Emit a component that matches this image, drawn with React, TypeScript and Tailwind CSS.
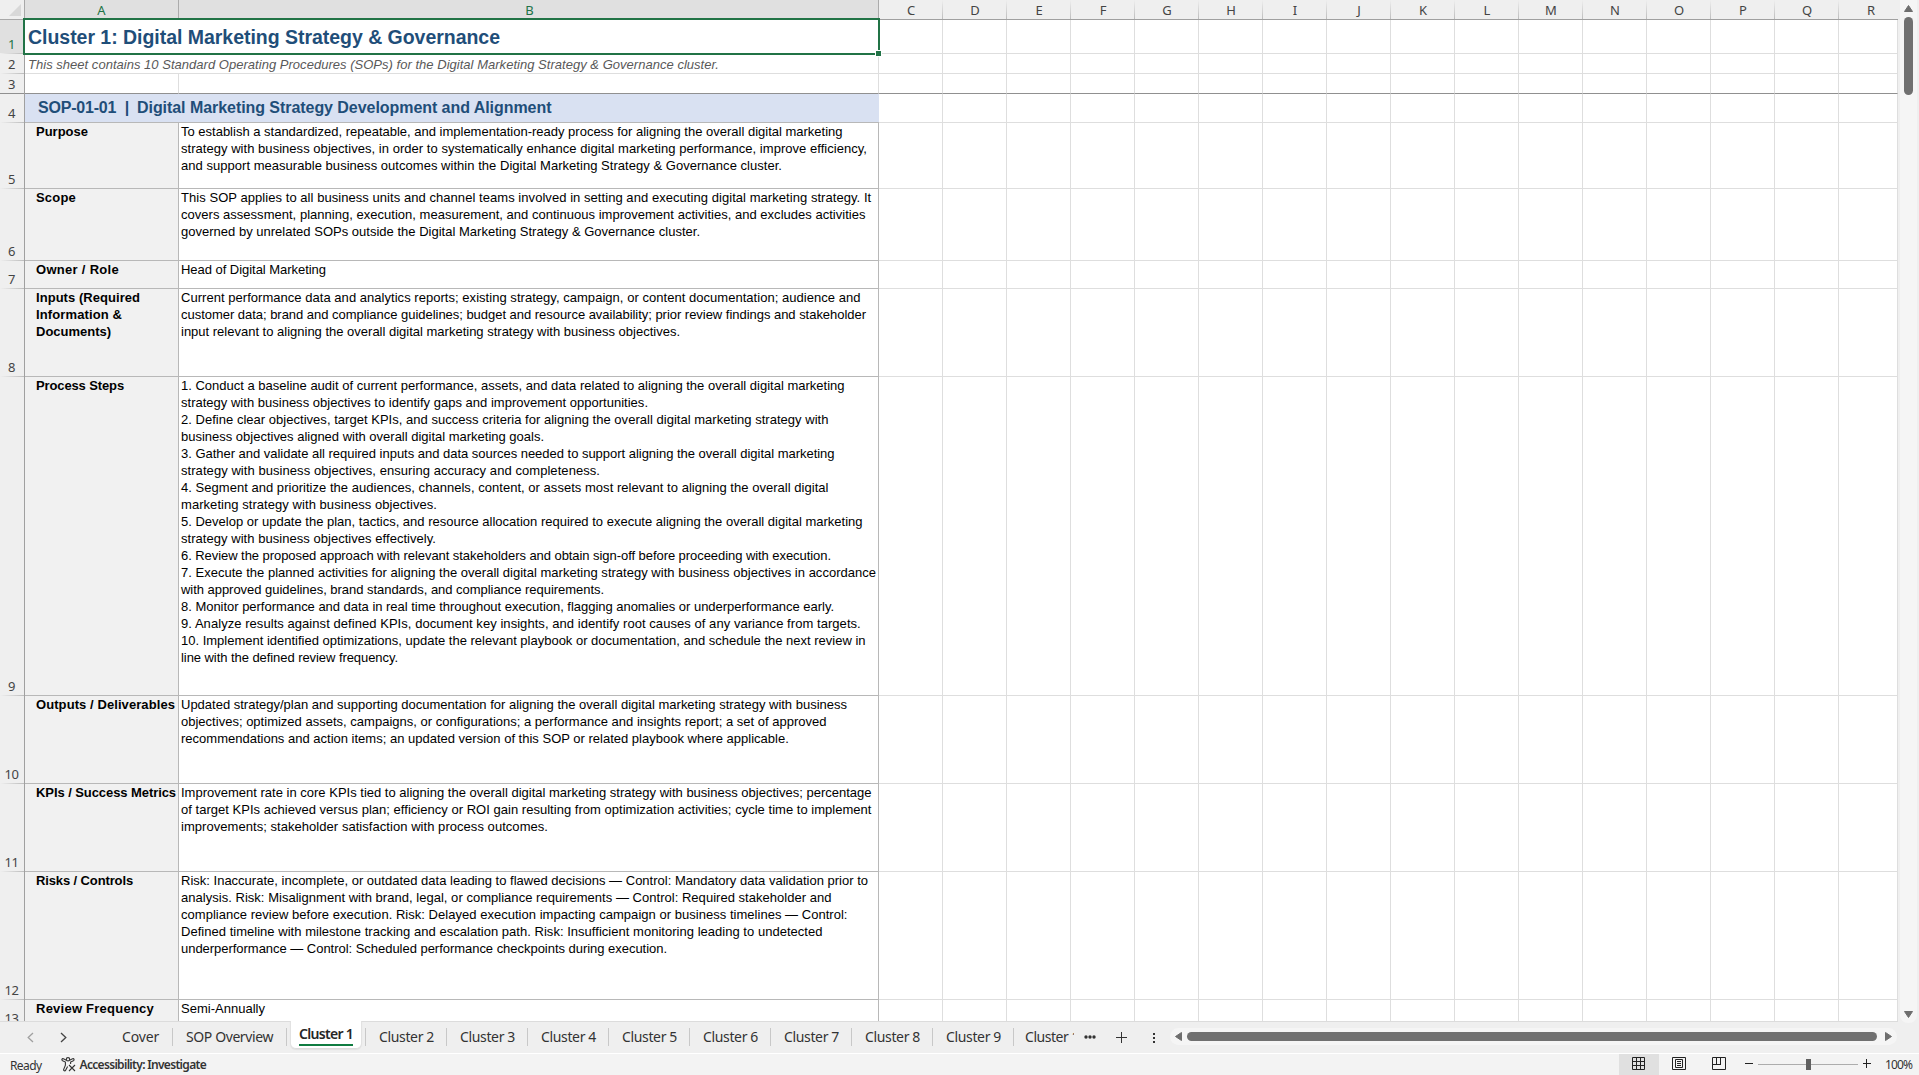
import clsx from 'clsx'

type Line = [text: string, width: number]

type SheetRow = {
  n: number
  height: string
  label: Line[]
  lines: Line[]
}

const SHEET_ROWS: SheetRow[] = [
  {
    n: 5,
    height: 'h-[66px]',
    label: [['Purpose', 52]],
    lines: [
      ['To establish a standardized, repeatable, and implementation-ready process for aligning the overall digital marketing', 661.5],
      ['strategy with business objectives, in order to systematically enhance digital marketing performance, improve efficiency,', 686],
      ['and support measurable business outcomes within the Digital Marketing Strategy & Governance cluster.', 601],
    ],
  },
  {
    n: 6,
    height: 'h-[72px]',
    label: [['Scope', 40]],
    lines: [
      ['This SOP applies to all business units and channel teams involved in setting and executing digital marketing strategy. It', 690.5],
      ['covers assessment, planning, execution, measurement, and continuous improvement activities, and excludes activities', 684.5],
      ['governed by unrelated SOPs outside the Digital Marketing Strategy & Governance cluster.', 519],
    ],
  },
  {
    n: 7,
    height: 'h-[28px]',
    label: [['Owner / Role', 83]],
    lines: [['Head of Digital Marketing', 145]],
  },
  {
    n: 8,
    height: 'h-[88px]',
    label: [['Inputs (Required', 104], ['Information &', 86], ['Documents)', 75]],
    lines: [
      ['Current performance data and analytics reports; existing strategy, campaign, or content documentation; audience and', 679.5],
      ['customer data; brand and compliance guidelines; budget and resource availability; prior review findings and stakeholder', 685],
      ['input relevant to aligning the overall digital marketing strategy with business objectives.', 499],
    ],
  },
  {
    n: 9,
    height: 'h-[319px]',
    label: [['Process Steps', 88]],
    lines: [
      ['1. Conduct a baseline audit of current performance, assets, and data related to aligning the overall digital marketing', 663.5],
      ['strategy with business objectives to identify gaps and improvement opportunities.', 467],
      ['2. Define clear objectives, target KPIs, and success criteria for aligning the overall digital marketing strategy with', 647.5],
      ['business objectives aligned with overall digital marketing goals.', 363],
      ['3. Gather and validate all required inputs and data sources needed to support aligning the overall digital marketing', 653.5],
      ['strategy with business objectives, ensuring accuracy and completeness.', 419],
      ['4. Segment and prioritize the audiences, channels, content, or assets most relevant to aligning the overall digital', 647.5],
      ['marketing strategy with business objectives.', 256],
      ['5. Develop or update the plan, tactics, and resource allocation required to execute aligning the overall digital marketing', 681.5],
      ['strategy with business objectives effectively.', 255],
      ['6. Review the proposed approach with relevant stakeholders and obtain sign-off before proceeding with execution.', 650],
      ['7. Execute the planned activities for aligning the overall digital marketing strategy with business objectives in accordance', 695],
      ['with approved guidelines, brand standards, and compliance requirements.', 423],
      ['8. Monitor performance and data in real time throughout execution, flagging anomalies or underperformance early.', 653],
      ['9. Analyze results against defined KPIs, document key insights, and identify root causes of any variance from targets.', 680.5],
      ['10. Implement identified optimizations, update the relevant playbook or documentation, and schedule the next review in', 684.5],
      ['line with the defined review frequency.', 217],
    ],
  },
  {
    n: 10,
    height: 'h-[88px]',
    label: [['Outputs / Deliverables', 139]],
    lines: [
      ['Updated strategy/plan and supporting documentation for aligning the overall digital marketing strategy with business', 666],
      ['objectives; optimized assets, campaigns, or configurations; a performance and insights report; a set of approved', 645.5],
      ['recommendations and action items; an updated version of this SOP or related playbook where applicable.', 608],
    ],
  },
  {
    n: 11,
    height: 'h-[88px]',
    label: [['KPIs / Success Metrics', 140]],
    lines: [
      ['Improvement rate in core KPIs tied to aligning the overall digital marketing strategy with business objectives; percentage', 690.5],
      ['of target KPIs achieved versus plan; efficiency or ROI gain resulting from optimization activities; cycle time to implement', 690.5],
      ['improvements; stakeholder satisfaction with process outcomes.', 367],
    ],
  },
  {
    n: 12,
    height: 'h-[128px]',
    label: [['Risks / Controls', 97]],
    lines: [
      ['Risk: Inaccurate, incomplete, or outdated data leading to flawed decisions — Control: Mandatory data validation prior to', 687],
      ['analysis. Risk: Misalignment with brand, legal, or compliance requirements — Control: Required stakeholder and', 650.5],
      ['compliance review before execution. Risk: Delayed execution impacting campaign or business timelines — Control:', 666.5],
      ['Defined timeline with milestone tracking and escalation path. Risk: Insufficient monitoring leading to undetected', 641.5],
      ['underperformance — Control: Scheduled performance checkpoints during execution.', 486],
    ],
  },
  {
    n: 13,
    height: 'h-[28px]',
    label: [['Review Frequency', 118]],
    lines: [['Semi-Annually', 84]],
  },
]

const COLUMNS = ['C', 'D', 'E', 'F', 'G', 'H', 'I', 'J', 'K', 'L', 'M', 'N', 'O', 'P', 'Q', 'R']
const TABS = ['Cluster 2', 'Cluster 3', 'Cluster 4', 'Cluster 5', 'Cluster 6', 'Cluster 7', 'Cluster 8', 'Cluster 9']

const ARIAL = '"Liberation Sans", Arial, sans-serif'
const UI = '"Noto Sans", sans-serif'

const ctx = document.createElement('canvas').getContext('2d')!

// letter spacing that makes the text fill the given width
function tracking(text: string, font: string, width: number) {
  ctx.font = font
  return (width - ctx.measureText(text).width) / text.length
}

function Text({ text, width, font, className }: { text: string; width: number; font: string; className?: string }) {
  return (
    <span
      className={clsx('block whitespace-pre', className)}
      style={{ font, lineHeight: 'inherit', letterSpacing: `${tracking(text, font, width)}px` }}
    >
      {text}
    </span>
  )
}

function RowHeader({ n, selected, frozen }: { n: number; selected?: boolean; frozen?: boolean }) {
  return (
    <div
      className={clsx(
        'flex w-[25px] shrink-0 flex-col justify-end border-r border-[#a0a0a0]',
        selected ? 'bg-[#e0e0e0] text-[#217346]' : 'bg-[#efefef] text-[#444444]'
      )}
    >
      <div className="pr-px text-center font-['Noto_Sans',sans-serif] text-[13px] leading-[18px] tracking-[-0.4px]">{n}</div>
      <div className={clsx('h-px shrink-0', frozen ? 'bg-[#909090]' : 'bg-linear-to-r from-[#efefef] to-[#bdbdbd]')} />
    </div>
  )
}

function EmptyCells({ frozen }: { frozen?: boolean }) {
  return (
    <>
      {COLUMNS.map((c) => (
        <div
          key={c}
          className={clsx(
            'shrink-0 border-r border-b border-r-[#dedede]',
            c === 'R' ? 'w-[59px]' : 'w-16',
            frozen ? 'border-b-[#909090]' : 'border-b-[#dedede]'
          )}
        />
      ))}
    </>
  )
}

function ColumnHeaders() {
  return (
    <div className="flex h-5 shrink-0 font-['Noto_Sans',sans-serif] text-[13px] leading-[21px] text-[#444444]">
      <div className="flex w-[25px] items-start justify-end border-r border-b border-[#a8a8a8] pt-1 pr-[3px]">
        <svg width="12" height="12" viewBox="0 0 12 12">
          <path d="M12 0V12H0Z" fill="#d8d8d8" />
        </svg>
      </div>
      <div className="w-[154px] border-r border-[#ababab] bg-[#e0e0e0] text-center text-[#217346]">A</div>
      <div className="w-[700px] border-r border-[#ababab] bg-[#e0e0e0] pl-[2px] text-center text-[#217346]">B</div>
      {COLUMNS.map((c) => (
        <div key={c} className={clsx('flex border-b border-[#a0a0a0]', c === 'R' ? 'w-[59px]' : 'w-16')}>
          <div className={clsx('flex-1 text-center', c === 'R' ? 'pl-[5px]' : 'pl-px')}>{c}</div>
          {c !== 'R' && <div className="w-px bg-linear-to-b from-[#efefef] to-[#bdbdbd]" />}
        </div>
      ))}
    </div>
  )
}

function Sheet() {
  return (
    <div className="relative flex w-[1898px] shrink-0 flex-col overflow-hidden">
      <ColumnHeaders />

      <div className="flex h-[34px] shrink-0 bg-white">
        <RowHeader n={1} selected />
        <div className="w-[854px] border-r border-b border-[#dedede] pl-[3px] leading-[34px] text-[#1f4e79]">
          <Text text="Cluster 1: Digital Marketing Strategy & Governance" width={472} font={`bold 19.5px ${ARIAL}`} />
        </div>
        <EmptyCells />
      </div>
      <div className="flex h-5 shrink-0 bg-white">
        <RowHeader n={2} />
        <div className="w-[854px] border-r border-b border-[#dedede] pl-[3px] leading-[22px] text-[#595959]">
          <Text
            text="This sheet contains 10 Standard Operating Procedures (SOPs) for the Digital Marketing Strategy & Governance cluster."
            width={691}
            font={`italic 13px ${ARIAL}`}
          />
        </div>
        <EmptyCells />
      </div>
      <div className="flex h-5 shrink-0 bg-white">
        <RowHeader n={3} frozen />
        <div className="w-[154px] border-r border-b border-r-[#dedede] border-b-[#909090]" />
        <div className="w-[700px] border-r border-b border-r-[#dedede] border-b-[#909090]" />
        <EmptyCells frozen />
      </div>
      <div className="flex h-[29px] shrink-0 bg-white">
        <RowHeader n={4} />
        <div className="flex w-[854px] border-b border-[#b8b8b8] bg-[#d9e1f2] pl-[13px] leading-[28px] text-[#1f4e79]">
          <Text className="w-[99px]" text="SOP-01-01  |" width={91} font={`bold 16px ${ARIAL}`} />
          <Text text="Digital Marketing Strategy Development and Alignment" width={415} font={`bold 16px ${ARIAL}`} />
        </div>
        <EmptyCells />
      </div>

      {SHEET_ROWS.map((row) => (
        <div key={row.n} className={clsx('flex shrink-0 bg-white', row.height)}>
          <RowHeader n={row.n} />
          <div className="w-[154px] border-r border-b border-[#b8b8b8] bg-[#f1f1f1] pl-[11px] leading-[17px] text-black">
            {row.label.map(([text, width]) => (
              <Text key={text} text={text} width={width} font={`bold 13px ${ARIAL}`} />
            ))}
          </div>
          <div className="w-[700px] border-r border-b border-[#b8b8b8] pl-[2px] leading-[17px] text-black">
            {row.lines.map(([text, width]) => (
              <Text key={text} text={text} width={width} font={`13px ${ARIAL}`} />
            ))}
          </div>
          <EmptyCells />
        </div>
      ))}

      {/* Selection frame with its fill handle */}
      <div className="absolute top-[18px] left-[23px] h-[37px] w-[857px] border-2 border-[#217346]">
        <div className="absolute -right-[4px] -bottom-[4px] size-[7px] border border-white bg-[#217346]" />
      </div>
    </div>
  )
}

function VerticalScrollbar() {
  return (
    <div className="-mb-[2px] ml-[2px] flex w-[17px] flex-col items-center rounded-b-lg bg-[#f5f5f5] pt-[5px] pb-[5px]">
      <svg width="9" height="7" viewBox="0 0 9 7">
        <path d="M4.5 0.5L8.5 6.5H0.5Z" fill="#6e6e6e" stroke="#6e6e6e" strokeLinejoin="round" />
      </svg>
      <div className="mt-[5px] h-[78px] w-[9px] rounded-full bg-[#707070]" />
      <svg className="mt-auto" width="9" height="7" viewBox="0 0 9 7">
        <path d="M0.5 0.5H8.5L4.5 6.5Z" fill="#6e6e6e" stroke="#6e6e6e" strokeLinejoin="round" />
      </svg>
    </div>
  )
}

function TabBar() {
  return (
    <div className="flex h-8 shrink-0 text-[#333333]">
      <div className="flex w-[1898px] border-t border-[#dcdcdc] leading-[29px]">
        <div className="flex w-[110px] items-center pt-px pb-[2px] pl-[27px]">
          <svg width="7" height="11" viewBox="0 0 7 11" fill="none" stroke="#a0a0a0" strokeWidth="1.3">
            <path d="M6 1L1.2 5.5L6 10" />
          </svg>
          <svg className="ml-[26px]" width="7" height="11" viewBox="0 0 7 11" fill="none" stroke="#444444" strokeWidth="1.3">
            <path d="M1 1L5.8 5.5L1 10" />
          </svg>
        </div>
        <div className="w-[62px] pl-[12px]">
          <Text text="Cover" width={37} font={`14px ${UI}`} />
        </div>
        <div className="mt-[6px] h-[18px] w-px bg-[#c8c8c8]" />
        <div className="w-[113px] pl-[13px]">
          <Text text="SOP Overview" width={87} font={`14px ${UI}`} />
        </div>
        <div className="mt-[6px] h-[18px] w-px bg-[#c8c8c8]" />
        <div className="mx-[4px] -mt-px h-[28px] w-[70px] rounded-b-[5px] border-b border-[#dcdcdc] bg-white pl-[8px] shadow-[0_0_1px_1px_#e0e0e0] [clip-path:inset(0_-2px_-2px_-2px)]">
          <div className="h-[23px] leading-[25px] text-[#262626]">
            <Text text="Cluster 1" width={54} font={`600 14px ${UI}`} />
          </div>
          <div className="h-[2px] w-[54px] bg-[#107c41]" />
        </div>
        <div className="mt-[6px] h-[18px] w-px bg-[#c8c8c8]" />
        {TABS.map((tab) => (
          <div key={tab} className="flex w-[81px]">
            <div className="w-20 pl-[13px]">
              <Text text={tab} width={55} font={`14px ${UI}`} />
            </div>
            <div className="mt-[6px] h-[18px] w-px bg-[#c8c8c8]" />
          </div>
        ))}
        <div className="w-[60px] overflow-hidden pl-[11px]">
          <Text text="Cluster 10" width={61.5} font={`14px ${UI}`} />
        </div>
        <div className="flex items-center pb-px">
          <svg className="ml-[10px]" width="12" height="4" viewBox="0 0 12 4" fill="#333333">
            <circle cx="2" cy="2" r="1.7" />
            <circle cx="6" cy="2" r="1.7" />
            <circle cx="10" cy="2" r="1.7" />
          </svg>
          <svg className="ml-[20px]" width="11" height="11" viewBox="0 0 11 11" stroke="#333333">
            <path d="M5.5 0V11M0 5.5H11" />
          </svg>
          <svg className="mt-[3px] ml-[26px]" width="2" height="11" viewBox="0 0 2 11" fill="#333333">
            <path d="M0 0h2v2H0zM0 4h2v2H0zM0 8h2v2H0z" />
          </svg>
        </div>
        <div className="mt-[6px] mr-px ml-auto flex h-[17px] w-[727px] items-center rounded-full bg-[#f5f5f5] px-[5px]">
          <svg width="7" height="9" viewBox="0 0 7 9">
            <path d="M6.5 0.5V8.5L0.5 4.5Z" fill="#6e6e6e" stroke="#6e6e6e" strokeLinejoin="round" />
          </svg>
          <div className="ml-[5px] h-[9px] w-[690px] rounded-full bg-[#707070]" />
          <svg className="ml-auto" width="7" height="9" viewBox="0 0 7 9">
            <path d="M0.5 0.5V8.5L6.5 4.5Z" fill="#6e6e6e" stroke="#6e6e6e" strokeLinejoin="round" />
          </svg>
        </div>
      </div>
    </div>
  )
}

function StatusBar() {
  return (
    <div className="flex h-[22px] shrink-0 border-t border-white bg-[#f3f3f3] leading-[21px] text-[#333333]">
      <div className="pt-px pl-[10px]">
        <Text text="Ready" width={31.5} font={`12px ${UI}`} />
      </div>
      <svg className="mt-[3px] ml-[19px]" width="15" height="15" viewBox="0 0 15 15" fill="none" stroke="#333333" strokeWidth="1.1">
        <circle cx="7" cy="2.3" r="1.7" />
        <path d="M5.4 3.2L2.4 1.8C1 1.3 0.3 3 1.6 3.7L4.4 5V8.2L2.7 12.4C2.3 13.8 4 14.4 4.6 13.2L6.6 9.4" />
        <path d="M8.6 3.2L11.6 1.8C13 1.3 13.7 3 12.4 3.7L9.6 5V7" />
        <path d="M8 8L14 14M14 8L8 14" />
      </svg>
      <div className="pl-1">
        <Text text="Accessibility: Investigate" width={126.5} font={`600 12px ${UI}`} />
      </div>

      <div className="ml-auto flex">
        <div className="flex w-10 bg-[#e0e0e0] pt-[3px] pl-[13px]">
          <svg width="13" height="13" viewBox="0 0 13 13" fill="none" stroke="#222222">
            <path d="M0.5 0.5H12.5V12.5H0.5ZM4.5 0V13M8.5 0V13M0 4.5H13M0 8.5H13" />
          </svg>
        </div>
        <div className="flex w-10 pt-[3px] pl-[13px]">
          <svg width="14" height="13" viewBox="0 0 14 13" fill="none" stroke="#222222">
            <path d="M0.5 0.5H13.5V12.5H0.5ZM3.5 2.5H10.5V10.5H3.5ZM5 4.5H9M5 6.5H9M5 8.5H9" />
          </svg>
        </div>
        <div className="flex w-10 pt-[3px] pl-[13px]">
          <svg width="14" height="13" viewBox="0 0 14 13" fill="none" stroke="#222222">
            <path d="M0.5 0.5H13.5V12.5H0.5ZM4.5 0V7.5M8.5 0V7.5M0 7.5H9" />
          </svg>
        </div>
        <div className="flex w-[140px] items-start pt-[5px] pl-[6px]">
          <svg className="mt-[4px]" width="8" height="1" viewBox="0 0 8 1">
            <path d="M0 0.5H8" stroke="#222222" />
          </svg>
          <div className="ml-[5px] flex h-[11px] w-[100px] items-center justify-center bg-linear-to-b from-transparent from-[5px] via-[#666666] via-[5px] to-transparent to-[6px]">
            <div className="h-[11px] w-[5px] bg-[#606060]" />
          </div>
          <svg className="ml-[5px]" width="8" height="9" viewBox="0 0 8 9" stroke="#222222">
            <path d="M0 4.5H8M3.5 0V9" />
          </svg>
        </div>
        <div className="w-10 pl-[6px]">
          <Text text="100%" width={27} font={`12px ${UI}`} />
        </div>
      </div>
    </div>
  )
}

export default function App() {
  return (
    <div className="flex h-[1075px] w-[1919px] flex-col overflow-hidden bg-[#efefef]">
      <div className="flex h-[1021px] shrink-0">
        <Sheet />
        <VerticalScrollbar />
      </div>
      <TabBar />
      <StatusBar />
    </div>
  )
}
